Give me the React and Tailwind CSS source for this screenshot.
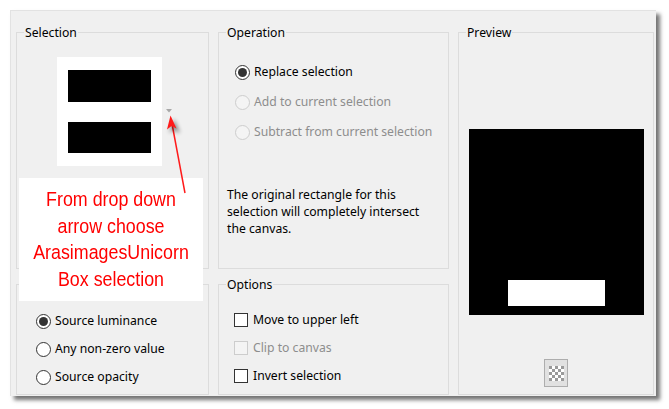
import React from 'react';

const ui = { fontFamily: '"Noto Sans", "Open Sans", sans-serif' };

function Group({ title, className = '', children }) {
  return (
    <div className={`relative border border-[#dcdcdc] ${className}`}>
      {title && (
        <span className="absolute -top-[8px] left-[7px] px-[1px] bg-[#f0f0f0] leading-[16px] text-black">
          {title}
        </span>
      )}
      {children}
    </div>
  );
}

function Radio({ checked, disabled, label, h = 'h-[28px]' }) {
  return (
    <div className={`flex items-center ${h}`}>
      <span
        className={`w-[15px] h-[15px] rounded-full border flex items-center justify-center ${
          disabled ? 'border-[#cdcdcd] bg-[#f4f4f4]' : 'border-[#333333] bg-white'
        }`}
      >
        {checked && <span className="w-[9px] h-[9px] rounded-full bg-[#333333]" />}
      </span>
      <span className={`ml-[4px] ${disabled ? 'text-[#8d8d8d]' : 'text-black'}`}>{label}</span>
    </div>
  );
}

function Check({ disabled, label }) {
  return (
    <div className="flex items-center h-[28px]">
      <span
        className={`w-[14px] h-[14px] border ${
          disabled ? 'border-[#cdcdcd] bg-[#f4f4f4]' : 'border-[#333333] bg-white'
        }`}
      />
      <span className={`ml-[5px] ${disabled ? 'text-[#8d8d8d]' : 'text-black'}`}>{label}</span>
    </div>
  );
}

function Checker() {
  const cells = [];
  for (let r = 0; r < 5; r++) {
    for (let c = 0; c < 5; c++) {
      if ((r + c) % 2 === 0) cells.push(<rect key={`${r}-${c}`} x={c * 3} y={r * 3} width="3" height="3" fill="#9a9a9a" />);
    }
  }
  return (
    <svg width="15" height="15" viewBox="0 0 15 15">
      <rect width="15" height="15" fill="#ffffff" />
      {cells}
    </svg>
  );
}

export default function App() {
  return (
    <div className="relative w-[669px] h-[409px] bg-white pt-[10px] pl-[10px] overflow-hidden text-[12.2px]" style={ui}>
      <div className="w-[646px] h-[386px] bg-[#f0f0f0] border-t border-l border-[#e2e2e2] shadow-[4px_4px_4px_rgba(0,0,0,0.55)] flex gap-[9px] pl-[5px] pr-[2px] pt-[21px]">
        {/* left column */}
        <div className="w-[193px] flex flex-col gap-[15px]">
          <Group title="Selection" className="h-[237px] pt-[24px] pl-[40px]">
            <div className="flex items-center">
              <div className="w-[105px] h-[109px] bg-white pt-[13px] pl-[11px]">
                <div className="w-[83px] h-[32px] bg-black" />
                <div className="w-[83px] h-[31px] bg-black mt-[20px]" />
              </div>
              <svg width="6" height="4" viewBox="0 0 6 4" className="ml-[4px] -mt-[1px]">
                <path d="M0 0 L6 0 L3 3.5 Z" fill="#a8a8a8" />
              </svg>
            </div>
          </Group>
          <Group className="h-[111px] pt-[22px] pl-[19px]">
            <Radio checked label="Source luminance" />
            <Radio label="Any non-zero value" />
            <Radio label="Source opacity" />
          </Group>
        </div>

        {/* middle column */}
        <div className="w-[231px] flex flex-col gap-[15px]">
          <Group title="Operation" className="h-[237px] pt-[24px] pl-[16px]">
            <Radio checked label="Replace selection" h="h-[30px]" />
            <Radio disabled label="Add to current selection" h="h-[30px]" />
            <Radio disabled label="Subtract from current selection" h="h-[30px]" />
            <p className="mt-[39px] -ml-[8px] leading-[17px] text-black">
              The original rectangle for this
              <br />
              selection will completely intersect
              <br />
              the canvas.
            </p>
          </Group>
          <Group title="Options" className="h-[111px] pt-[21px] pl-[15px]">
            <Check label="Move to upper left" />
            <Check disabled label="Clip to canvas" />
            <Check label="Invert selection" />
          </Group>
        </div>

        {/* right column */}
        <Group title="Preview" className="w-[196px] h-[363px] pt-[96px] flex flex-col items-center">
          <div className="w-[175px] h-[186px] bg-black pt-[151px] pl-[39px]">
            <div className="w-[97px] h-[26px] bg-white" />
          </div>
          <div className="mt-[44px] w-[24px] h-[28px] border border-[#adadad] bg-[#e1e1e1] flex items-center justify-center">
            <Checker />
          </div>
        </Group>
      </div>

      {/* annotation overlay */}
      <div
        className="absolute left-[19px] top-[178px] w-[184px] h-[123px] bg-white pt-[8px] text-center text-[#ff0000] text-[20.5px] leading-[26.5px]"
        style={{ fontFamily: '"Liberation Sans", Arial, sans-serif' }}
      >
        <div className="scale-x-[0.87]">
          From drop down
          <br />
          arrow choose
          <br />
          ArasimagesUnicorn
          <br />
          Box selection
        </div>
      </div>
      <svg className="absolute left-0 top-0 pointer-events-none" width="669" height="409" viewBox="0 0 669 409">
        <defs>
          <filter id="sh" x="-50%" y="-50%" width="200%" height="200%">
            <feGaussianBlur stdDeviation="2" />
          </filter>
        </defs>
        <line x1="185" y1="193" x2="172" y2="124" stroke="#ff1a1a" strokeWidth="1.5" />
        <path d="M174 119 L180 133 L173 130 L169 133 Z" fill="#000" opacity="0.45" filter="url(#sh)" />
        <path d="M170.5 115.5 L176.5 128.5 L171.5 126 L167 129.5 Z" fill="#ff1a1a" />
      </svg>
    </div>
  );
}
